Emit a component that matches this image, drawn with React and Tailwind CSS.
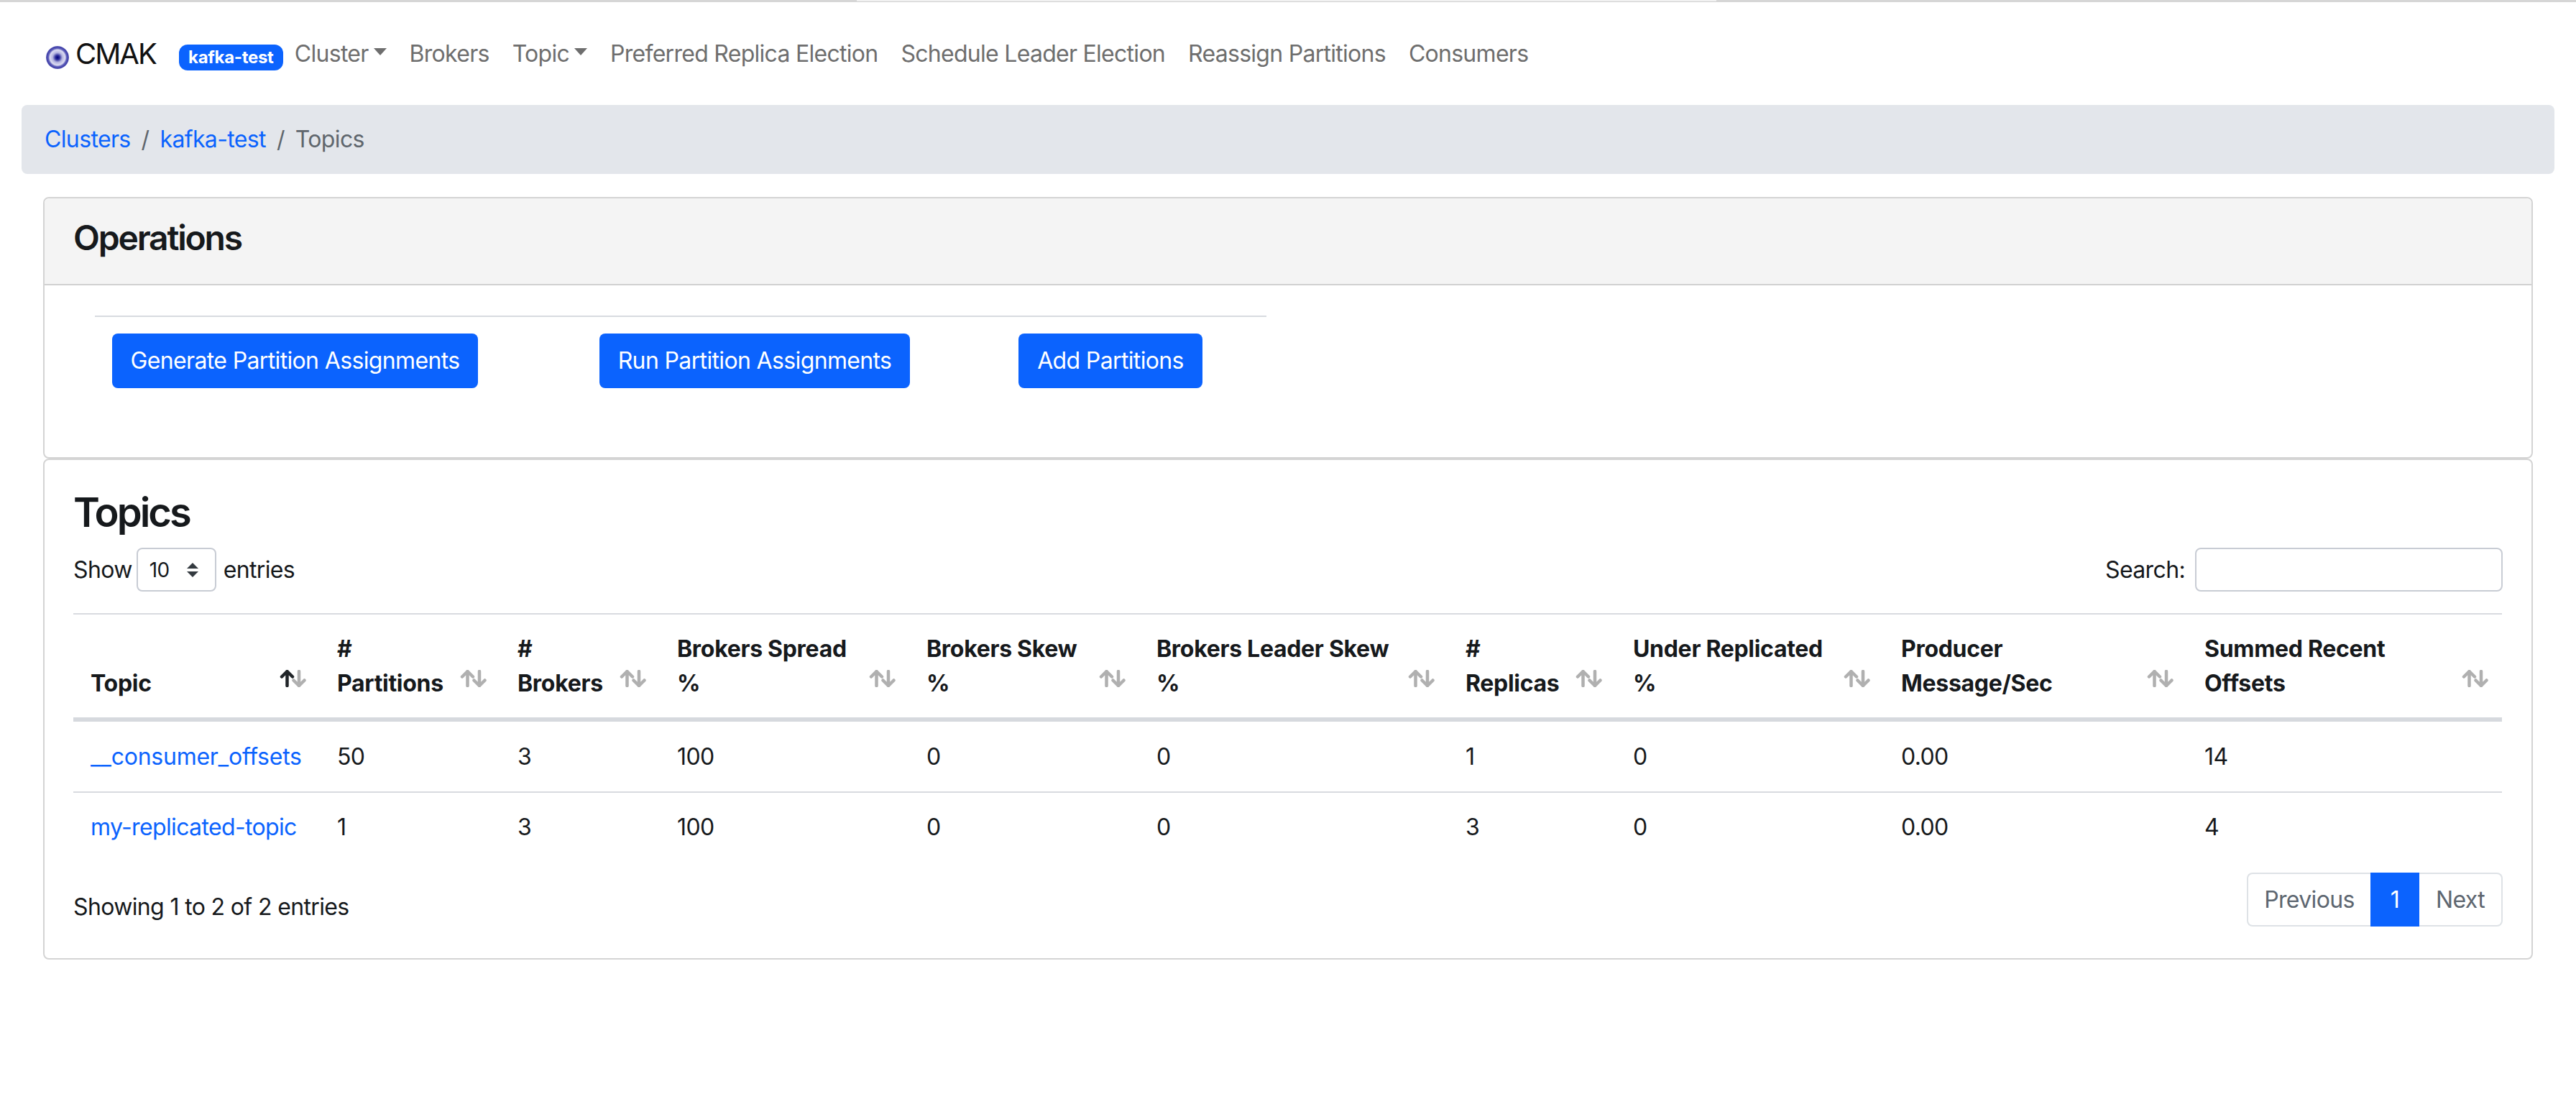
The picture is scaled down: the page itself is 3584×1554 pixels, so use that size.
import React from 'react'

const navLinks = [
  { label: 'Cluster', caret: true },
  { label: 'Brokers' },
  { label: 'Topic', caret: true },
  { label: 'Preferred Replica Election' },
  { label: 'Schedule Leader Election' },
  { label: 'Reassign Partitions' },
  { label: 'Consumers' },
]

const columns = [
  { lines: ['Topic'], width: 'w-[343px]' },
  { lines: ['#', 'Partitions'], width: 'w-[251px]' },
  { lines: ['#', 'Brokers'], width: 'w-[222px]' },
  { lines: ['Brokers Spread', '%'], width: 'w-[347px]' },
  { lines: ['Brokers Skew', '%'], width: 'w-[320px]' },
  { lines: ['Brokers Leader Skew', '%'], width: 'w-[430px]' },
  { lines: ['#', 'Replicas'], width: 'w-[233px]' },
  { lines: ['Under Replicated', '%'], width: 'w-[373px]' },
  { lines: ['Producer', 'Message/Sec'], width: 'w-[422px]' },
  { lines: ['Summed Recent', 'Offsets'], width: 'w-[438px]' },
]

const rows = [
  ['__consumer_offsets', '50', '3', '100', '0', '0', '1', '0', '0.00', '14'],
  ['my-replicated-topic', '1', '3', '100', '0', '0', '3', '0', '0.00', '4'],
]

function Logo() {
  return (
    <svg width="32" height="32" viewBox="0 0 32 32" className="mt-[11px] shrink-0">
      <defs>
        <radialGradient id="cmak-logo">
          <stop offset="0" stopColor="#00007a" />
          <stop offset="0.18" stopColor="#2a2a9a" />
          <stop offset="0.42" stopColor="#b4b4e0" />
          <stop offset="0.66" stopColor="#dcdcf2" />
          <stop offset="0.8" stopColor="#5a5ab8" />
          <stop offset="0.95" stopColor="#4040a8" />
          <stop offset="1" stopColor="#8080c8" />
        </radialGradient>
      </defs>
      <circle cx="16" cy="16" r="16" fill="url(#cmak-logo)" />
    </svg>
  )
}

function SortArrows({ active }) {
  return (
    <svg
      width="37"
      height="24"
      viewBox="0 0 37 24"
      fill="none"
      strokeWidth="4.5"
      strokeLinecap="round"
      strokeLinejoin="round"
      className="absolute right-[19px] bottom-[42px]"
    >
      <path d="M27 2V22M19.5 14.5L27 22L34.5 14.5" stroke="#b0b0b0" />
      <path d="M10.5 2V22M3 9.5L10.5 2L18 9.5" stroke={active ? '#212529' : '#b0b0b0'} />
    </svg>
  )
}

function Button({ width, children }) {
  return (
    <button className={`h-[76px] rounded-lg bg-[#0b63fe] text-[32px] text-white ${width}`}>
      {children}
    </button>
  )
}

export default function App() {
  return (
    <div className="min-h-screen bg-white font-['Inter',sans-serif] text-[32px] leading-[48px] tracking-[-0.64px] text-[#16191c]">
      <div className="flex h-[3px]">
        <div className="w-[1192px] bg-[#d6d6d6]" />
        <div className="flex-1 border-b border-[#cfcfcf] bg-[#f1f1f1]" />
        <div className="w-[1196px] bg-[#d6d6d6]" />
      </div>

      <nav className="flex h-[143px] items-center pl-[64px]">
        <Logo />
        <span className="ml-[9px] text-[40px] tracking-[-2px] text-[#111111]">CMAK</span>
        <span className="mt-[11px] ml-[32px] flex h-[36px] w-[145px] items-center justify-center rounded-xl bg-[#0b63fe] text-[24px] leading-none font-bold tracking-[-0.3px] text-white">
          kafka-test
        </span>
        <div className="flex tracking-[-0.72px]">
          {navLinks.map((link) => (
            <a key={link.label} className="flex items-center px-4 text-[#6e6e6e]">
              {link.label}
              {link.caret && (
                <span className="mt-[-6px] ml-[7px] h-0 w-0 border-x-[9px] border-t-[10px] border-x-transparent border-t-[#6e6e6e]" />
              )}
            </a>
          ))}
        </div>
      </nav>

      <div className="mr-[30px] ml-[30px] flex h-[96px] items-center rounded-lg bg-[#e3e6eb] px-8 text-[#5f666d]">
        <a className="text-[#0b63fe]">Clusters</a>
        <span className="px-[15px]">/</span>
        <a className="text-[#0b63fe]">kafka-test</a>
        <span className="px-[15px]">/</span>
        <span>Topics</span>
      </div>

      <div className="mt-8 mr-[60px] ml-[60px]">
        <section className="rounded-lg border-2 border-[#d4d4d4]">
          <div className="flex h-[121px] items-center rounded-t-lg border-b-2 border-[#d0d0d0] bg-[#f4f4f4] px-10 pb-[10px]">
            <h4 className="text-[48px] leading-none font-semibold tracking-[-2.2px]">Operations</h4>
          </div>
          <div className="pt-[42px] pb-[96px] pl-[70px]">
            <div className="h-[2px] w-[1630px] bg-[#d8dbe0]" />
            <div className="mt-[23px] flex pl-6">
              <Button width="w-[509px]">Generate Partition Assignments</Button>
              <div className="w-[169px]" />
              <Button width="w-[432px]">Run Partition Assignments</Button>
              <div className="w-[151px]" />
              <Button width="w-[256px]">Add Partitions</Button>
            </div>
          </div>
        </section>

        <section className="rounded-lg border-2 border-[#d4d4d4] px-10 pt-10 pb-[44px]">
          <h3 className="text-[56px] leading-[67px] font-semibold tracking-[-3px]">Topics</h3>

          <div className="mt-[15px] flex items-center justify-between">
            <label className="flex items-center">
              Show
              <span className="relative mr-[10px] ml-[6px] block">
                <select className="block h-[61px] w-[111px] appearance-none rounded-lg border-2 border-[#c8ccd4] bg-white pl-4 text-[28px]">
                  <option>10</option>
                </select>
                <svg width="16" height="20" viewBox="0 0 16 20" className="absolute top-[21px] left-[70px]" fill="#343a40">
                  <path d="M8 0L16 8H0Z" />
                  <path d="M8 20L0 12H16Z" />
                </svg>
              </span>
              entries
            </label>
            <label className="flex items-center">
              Search:
              <input className="ml-[14px] h-[61px] w-[428px] rounded-lg border-2 border-[#c8ccd4] bg-white" />
            </label>
          </div>

          <table className="mt-[30px] w-[3379px] table-fixed border-separate border-spacing-0 border-t-2 border-[#d8dbe0]">
            <thead>
              <tr>
                {columns.map((col, i) => (
                  <th
                    key={col.lines.join(' ')}
                    className={`relative border-b-[6px] border-[#d6d9de] px-6 pt-6 pb-[23px] text-left align-bottom font-bold tracking-[-0.3px] ${col.width}`}
                  >
                    {col.lines.map((line) => (
                      <div key={line}>{line}</div>
                    ))}
                    <SortArrows active={i === 0} />
                  </th>
                ))}
              </tr>
            </thead>
            <tbody>
              {rows.map((row, r) => (
                <tr key={row[0]}>
                  {row.map((cell, c) => (
                    <td
                      key={c}
                      className={`px-6 whitespace-nowrap ${r === 0 ? 'h-[99px] border-b-2 border-[#d8dbe0]' : 'h-[96px]'}`}
                    >
                      {c === 0 ? (
                        <a className={`text-[#0b63fe] ${r === 0 ? 'tracking-[-0.25px]' : ''}`}>{cell}</a>
                      ) : (
                        cell
                      )}
                    </td>
                  ))}
                </tr>
              ))}
            </tbody>
          </table>

          <div className="mt-[15px] flex items-start justify-between">
            <div className="pt-6">Showing 1 to 2 of 2 entries</div>
            <div className="flex h-[75px] text-[#5d6670]">
              <a className="flex w-[172px] items-center justify-center rounded-l-lg border-2 border-r-0 border-[#dee2e6]">
                Previous
              </a>
              <a className="flex w-[68px] items-center justify-center bg-[#0b63fe] text-white">1</a>
              <a className="flex w-[116px] items-center justify-center rounded-r-lg border-2 border-l-0 border-[#dee2e6]">
                Next
              </a>
            </div>
          </div>
        </section>
      </div>
    </div>
  )
}
